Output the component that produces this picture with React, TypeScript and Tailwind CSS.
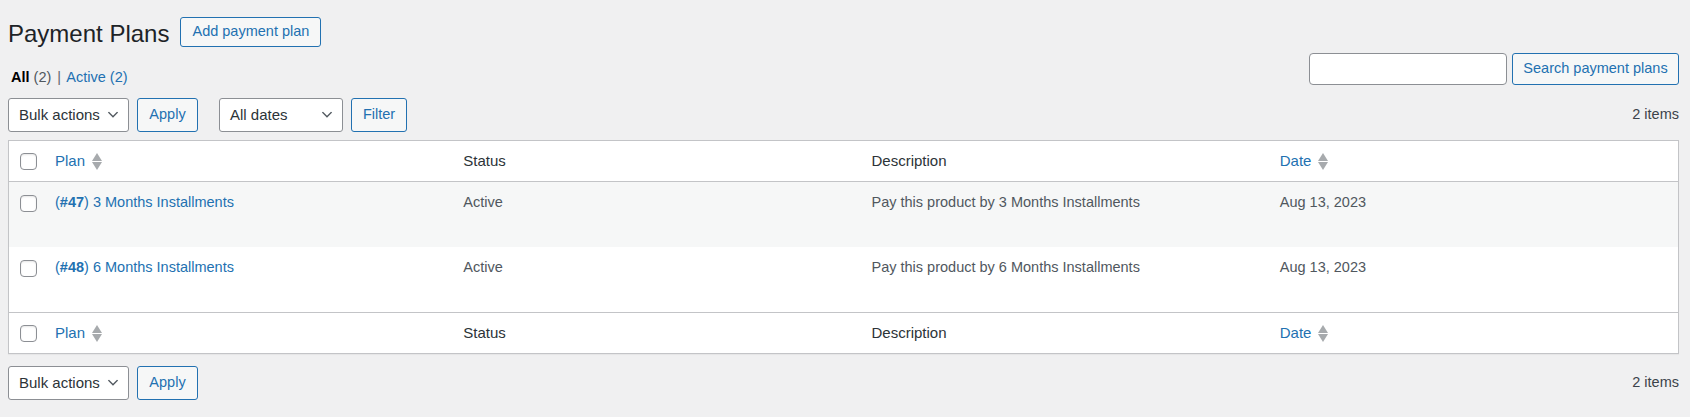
import React from "react";

type Plan = {
  id: number;
  title: string;
  status: string;
  description: string;
  date: string;
};

const plans: Plan[] = [
  {
    id: 47,
    title: "3 Months Installments",
    status: "Active",
    description: "Pay this product by 3 Months Installments",
    date: "Aug 13, 2023",
  },
  {
    id: 48,
    title: "6 Months Installments",
    status: "Active",
    description: "Pay this product by 6 Months Installments",
    date: "Aug 13, 2023",
  },
];

const buttonClassName =
  "flex items-center justify-center rounded-[3px] border border-[#2271b1] bg-[#f6f7f7] text-[14.5px] text-[#2271b1]";

function Chevron() {
  return (
    <svg width="16" height="16" viewBox="0 0 20 20" aria-hidden="true">
      <path d="M5 6l5 5 5-5 1.4.9L10 13.4 3.6 6.9 5 6z" fill="#50575e" />
    </svg>
  );
}

function SortIcon() {
  return (
    <svg width="10" height="17" viewBox="0 0 10 17" aria-hidden="true">
      <path d="M5 0L10 8H0z M0 9H10L5 17z" fill="#a7aaad" />
    </svg>
  );
}

function Checkbox() {
  return (
    <span className="block h-[17px] w-[17px] rounded-[4px] border border-[#8c8f94] bg-white shadow-[inset_0_1px_2px_rgba(0,0,0,0.1)]" />
  );
}

function FakeSelect({ label, width }: { label: string; width: string }) {
  return (
    <div
      className={`flex h-[34px] items-center justify-between rounded-[3px] border border-[#8c8f94] bg-white pl-[10px] pr-[7px] text-[15px] text-[#2c3338] ${width}`}
    >
      <span>{label}</span>
      <Chevron />
    </div>
  );
}

function HeaderRow({ edge }: { edge: "top" | "bottom" }) {
  const border = edge === "top" ? "border-b" : "border-t";
  const cell = `h-[41px] ${border} border-[#c3c4c7] px-[10px] text-left align-middle text-[15px] font-normal text-[#2c3338]`;
  return (
    <tr>
      <th className={`h-[41px] ${border} border-[#c3c4c7] align-middle`}>
        <div className="ml-[11px]">
          <Checkbox />
        </div>
      </th>
      <th className={cell}>
        <span className="flex items-center gap-[7px] text-[#2271b1]">
          Plan <SortIcon />
        </span>
      </th>
      <th className={cell}>Status</th>
      <th className={cell}>Description</th>
      <th className={cell}>
        <span className="flex items-center gap-[7px] text-[#2271b1]">
          Date <SortIcon />
        </span>
      </th>
    </tr>
  );
}

function Tablenav({ withFilter }: { withFilter: boolean }) {
  return (
    <div className="flex h-[34px] items-center">
      <FakeSelect label="Bulk actions" width="w-[121px]" />
      <button className={`${buttonClassName} ml-[8px] h-[34px] w-[61px]`}>Apply</button>
      {withFilter && (
        <>
          <FakeSelect label="All dates" width="ml-[21px] w-[124px]" />
          <button className={`${buttonClassName} ml-[8px] h-[34px] w-[56px]`}>Filter</button>
        </>
      )}
      <span className="ml-auto text-[14.5px] text-[#3c434a]">2 items</span>
    </div>
  );
}

export default function App() {
  return (
    <div className="h-[417px] bg-[#f0f0f1] pl-[8px] pr-[11px] font-['Liberation_Sans',Arial,sans-serif] text-[#3c434a]">
      <div className="flex h-[47px] items-start gap-[11px] pt-[17px]">
        <h1 className="pt-[4px] text-[24px] font-normal leading-[26px] text-[#1d2327]">Payment Plans</h1>
        <button className={`${buttonClassName} h-[30px] w-[141px]`}>Add payment plan</button>
      </div>

      <div className="mt-[6px] flex items-start justify-between">
        <div className="pl-[3px] pt-[14px] text-[14.5px] leading-[20px] text-[#50575e]">
          <span className="font-semibold text-black">All</span> (2){" "}
          <span className="px-[2px] text-[#646970]">|</span>{" "}
          <span className="text-[#2271b1]">Active (2)</span>
        </div>
        <div className="flex gap-[5px]">
          <input
            className="h-[32px] w-[198px] rounded-[4px] border border-[#8c8f94] bg-white px-[8px] text-[14.5px] outline-none"
            aria-label="Search payment plans"
          />
          <button className={`${buttonClassName} h-[32px] w-[167px]`}>Search payment plans</button>
        </div>
      </div>

      <div className="mt-[11px]">
        <Tablenav withFilter />
      </div>

      <table className="mt-[8px] w-full table-fixed border-separate border-spacing-0 border border-[#c3c4c7] bg-white shadow-[0_1px_1px_rgba(0,0,0,0.04)]">
        <colgroup>
          <col className="w-[36px]" />
          <col />
          <col />
          <col />
          <col />
        </colgroup>
        <thead>
          <HeaderRow edge="top" />
        </thead>
        <tbody>
          {plans.map((plan, index) => (
            <tr key={plan.id} className={index % 2 === 0 ? "bg-[#f6f7f7]" : "bg-white"}>
              <td className="h-[65px] pt-[13px] align-top">
                <div className="ml-[11px]">
                  <Checkbox />
                </div>
              </td>
              <td className="px-[10px] pt-[10px] align-top text-[14.5px] leading-[20px] text-[#2271b1]">
                (<strong className="font-bold">#{plan.id}</strong>) {plan.title}
              </td>
              <td className="px-[10px] pt-[10px] align-top text-[14.5px] leading-[20px] text-[#50575e]">
                {plan.status}
              </td>
              <td className="px-[10px] pt-[10px] align-top text-[14.5px] leading-[20px] text-[#50575e]">
                {plan.description}
              </td>
              <td className="px-[10px] pt-[10px] align-top text-[14.5px] leading-[20px] text-[#50575e]">
                {plan.date}
              </td>
            </tr>
          ))}
        </tbody>
        <tfoot>
          <HeaderRow edge="bottom" />
        </tfoot>
      </table>

      <div className="mt-[12px]">
        <Tablenav withFilter={false} />
      </div>
    </div>
  );
}
